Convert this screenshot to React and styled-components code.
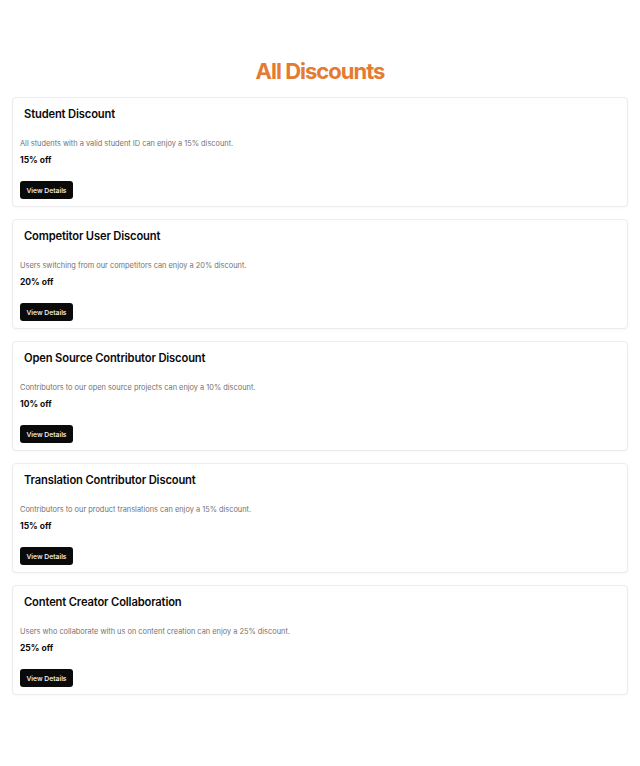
import styled, { createGlobalStyle } from "styled-components";

const GlobalStyle = createGlobalStyle`
  body {
    margin: 0;
    background: #fff;
    font-family: Inter, "Noto Sans", sans-serif;
    color: #0a0a0a;
  }
`;

const Page = styled.div`
  padding: 57px 12px 40px;
`;

const Heading = styled.h1`
  margin: 0 0 12px;
  text-align: center;
  font-size: 22px;
  line-height: 28px;
  font-weight: 700;
  letter-spacing: -1px;
  color: #e47b32;
`;

const List = styled.div`
  display: flex;
  flex-direction: column;
  gap: 12px;
`;

const Card = styled.div`
  border: 1px solid #ececec;
  border-radius: 4px;
  background: #fff;
  box-shadow: 0 1px 2px rgba(0, 0, 0, 0.03);
`;

const CardHeader = styled.div`
  padding: 9px 11px 0;
`;

const Title = styled.h2`
  margin: 0;
  font-size: 11.2px;
  line-height: 14px;
  font-weight: 600;
  letter-spacing: -0.15px;
  color: #0a0a0a;
`;

const CardBody = styled.div`
  padding: 18px 7px 7px;
`;

const Description = styled.p`
  margin: 0;
  font-size: 7.4px;
  line-height: 10px;
  color: #737373;
`;

const Amount = styled.p`
  margin: 5px 0 0;
  font-size: 8.5px;
  line-height: 12px;
  font-weight: 700;
  color: #0a0a0a;
`;

const Button = styled.button`
  margin-top: 15px;
  height: 18px;
  width: 53px;
  padding: 0;
  border: none;
  border-radius: 3px;
  background: #0a0a0a;
  color: #fff;
  font-family: inherit;
  font-size: 6.8px;
  font-weight: 500;
  cursor: pointer;
`;

const discounts = [
  {
    title: "Student Discount",
    description: "All students with a valid student ID can enjoy a 15% discount.",
    amount: "15% off",
  },
  {
    title: "Competitor User Discount",
    description: "Users switching from our competitors can enjoy a 20% discount.",
    amount: "20% off",
  },
  {
    title: "Open Source Contributor Discount",
    description: "Contributors to our open source projects can enjoy a 10% discount.",
    amount: "10% off",
  },
  {
    title: "Translation Contributor Discount",
    description: "Contributors to our product translations can enjoy a 15% discount.",
    amount: "15% off",
  },
  {
    title: "Content Creator Collaboration",
    description:
      "Users who collaborate with us on content creation can enjoy a 25% discount.",
    amount: "25% off",
  },
];

export default function App() {
  return (
    <>
      <GlobalStyle />
      <Page>
        <Heading>All Discounts</Heading>
        <List>
          {discounts.map((d) => (
            <Card key={d.title}>
              <CardHeader>
                <Title>{d.title}</Title>
              </CardHeader>
              <CardBody>
                <Description>{d.description}</Description>
                <Amount>{d.amount}</Amount>
                <Button>View Details</Button>
              </CardBody>
            </Card>
          ))}
        </List>
      </Page>
    </>
  );
}
